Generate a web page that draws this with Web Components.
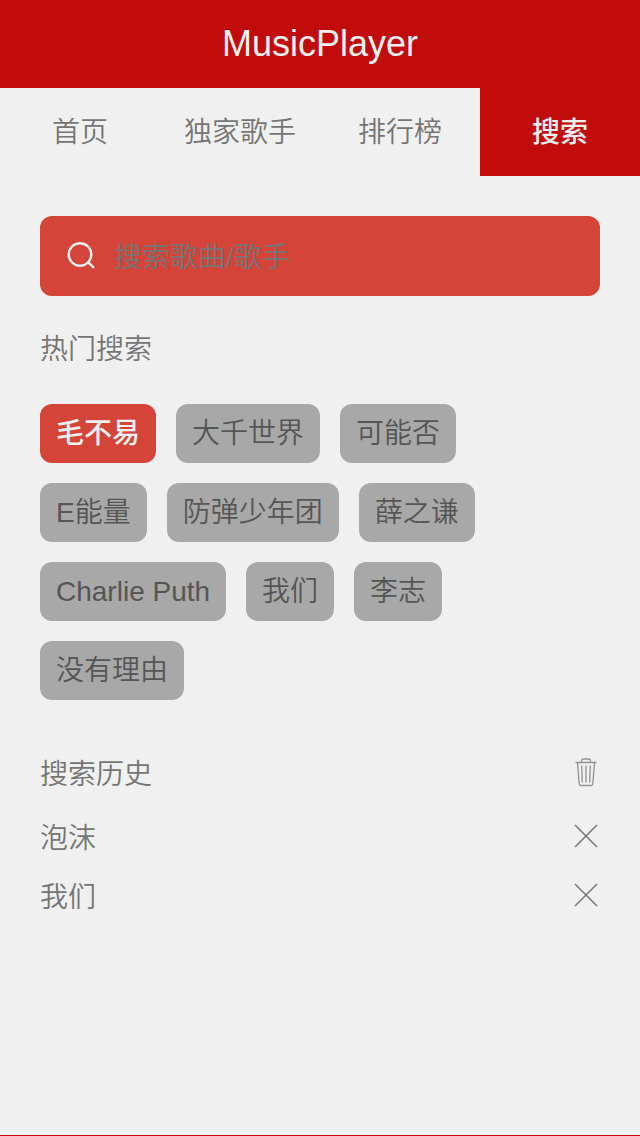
<!DOCTYPE html>
<html lang="zh-CN">
<head>
<meta charset="utf-8">
<meta name="viewport" content="width=device-width, initial-scale=1">
<title>MusicPlayer</title>
<style>
  body {
    margin: 0;
    background: #f0f0f0;
    color: #757575;
    font: 350 28px/40px "Liberation Sans", "Noto Sans CJK SC", sans-serif;
  }
</style>
</head>
<body>
<music-app></music-app>

<script>
const define = (name, html, setup) => {
  const template = document.createElement('template');
  template.innerHTML = html;
  customElements.define(name, class extends HTMLElement {
    constructor() {
      super();
      this.attachShadow({ mode: 'open' }).append(template.content.cloneNode(true));
    }
    connectedCallback() {
      if (setup) setup(this, this.shadowRoot);
    }
  });
};

define('app-header', `
  <style>
    :host { display: block; background: #c20c0c; color: #f0f0f0; }
    h1 { margin: 0; font-size: 36px; font-weight: 400; line-height: 88px; text-align: center; }
  </style>
  <h1><slot></slot></h1>
`);

define('nav-tab', `
  <style>
    :host { display: block; }
    a { display: block; padding-top: 2px; line-height: 86px; text-align: center; color: inherit; text-decoration: none; }
    :host([active]) a { background: #c20c0c; color: #f0f0f0; font-weight: 500; }
  </style>
  <a><slot></slot></a>
`, (host, root) => { root.querySelector('a').href = host.getAttribute('href'); });

define('nav-tabs', `
  <style>
    nav { display: grid; grid-template-columns: repeat(4, 1fr); }
    :host { display: block; }
  </style>
  <nav><slot></slot></nav>
`);

define('search-box', `
  <style>
    :host { display: block; }
    label {
      display: flex; align-items: center; gap: 16px;
      height: 80px; padding: 0 24px; box-sizing: border-box;
      background: #d44439; border-radius: 12px; color: #f0f0f0;
    }
    svg { flex: none; width: 34px; height: 34px; }
    input {
      flex: 1; min-width: 0; padding: 4px 0 0; border: 0; outline: 0;
      background: transparent; color: inherit; font: inherit;
    }
    input::placeholder { color: #757575; opacity: 1; }
  </style>
  <label>
    <svg viewBox="0 0 34 34" fill="none" stroke="currentColor" stroke-width="2.4" aria-hidden="true">
      <circle cx="16" cy="15.5" r="11.3"/>
      <path d="M24 23.2l6 5.6"/>
    </svg>
    <input type="text" placeholder="搜索歌曲/歌手" aria-label="搜索歌曲/歌手">
  </label>
`);

define('hot-tag', `
  <style>
    :host { display: block; }
    button {
      display: block; height: 59px; padding: 0 16px; border: 0; border-radius: 12px;
      background: #a8a8a8; color: #555; font: inherit; cursor: pointer;
    }
    :host([active]) button { background: #d44439; color: #f0f0f0; font-weight: 500; }
  </style>
  <button type="button"><slot></slot></button>
`);

define('hot-search', `
  <style>
    :host { display: block; }
    h2 { margin: 0 0 34px; font: inherit; }
    div { display: flex; flex-wrap: wrap; gap: 20px; padding-right: 80px; }
  </style>
  <h2>热门搜索</h2>
  <div><slot></slot></div>
`);

define('history-item', `
  <style>
    :host { display: flex; align-items: center; justify-content: space-between; }
    span { padding-top: 6px; line-height: 34px; }
    button { display: block; padding: 0; border: 0; background: none; color: inherit; cursor: pointer; }
    svg { display: block; width: 28px; height: 28px; }
  </style>
  <span><slot></slot></span>
  <button type="button" aria-label="删除">
    <svg viewBox="0 0 28 28" fill="none" stroke="currentColor" stroke-width="1.5" aria-hidden="true">
      <path d="M3 3l22 22M25 3l-22 22"/>
    </svg>
  </button>
`);

define('search-history', `
  <style>
    :host { display: block; }
    header { display: flex; align-items: center; justify-content: space-between; margin-bottom: 24px; }
    h2 { margin: 0; padding-top: 6px; font: inherit; line-height: 34px; }
    button { display: block; padding: 0; border: 0; background: none; color: #929292; cursor: pointer; }
    svg { display: block; width: 28px; height: 32px; }
    .list { display: grid; gap: 19px; }
  </style>
  <header>
    <h2>搜索历史</h2>
    <button type="button" aria-label="清空搜索历史">
      <svg viewBox="0 0 28 32" fill="none" stroke="currentColor" stroke-width="1.3" aria-hidden="true">
        <path d="M3.5 6.5h21M9.5 6.5v-1.7q0-1.8 1.8-1.8h5.4q1.8 0 1.8 1.8v1.7M5.5 6.5l1.7 21.2q.1 1.8 1.8 1.8h10q1.7 0 1.8-1.8L22.5 6.5M9.7 9.5l.6 17M14 9.5v17M18.3 9.5l-.6 17"/>
      </svg>
    </button>
  </header>
  <div class="list"><slot></slot></div>
`);

define('music-app', `
  <style>
    :host {
      display: flex; flex-direction: column; box-sizing: border-box;
      min-height: 100vh; border-bottom: 1px solid #c20c0c;
    }
    main { display: grid; padding: 40px; }
    hot-search { margin: 34px 0 52px; }
  </style>
  <app-header>MusicPlayer</app-header>
  <nav-tabs>
    <nav-tab href="#home">首页</nav-tab>
    <nav-tab href="#singers">独家歌手</nav-tab>
    <nav-tab href="#rank">排行榜</nav-tab>
    <nav-tab href="#search" active>搜索</nav-tab>
  </nav-tabs>
  <main>
    <search-box></search-box>
    <hot-search>
      <hot-tag active>毛不易</hot-tag>
      <hot-tag>大千世界</hot-tag>
      <hot-tag>可能否</hot-tag>
      <hot-tag>E能量</hot-tag>
      <hot-tag>防弹少年团</hot-tag>
      <hot-tag>薛之谦</hot-tag>
      <hot-tag>Charlie Puth</hot-tag>
      <hot-tag>我们</hot-tag>
      <hot-tag>李志</hot-tag>
      <hot-tag>没有理由</hot-tag>
    </hot-search>
    <search-history>
      <history-item>泡沫</history-item>
      <history-item>我们</history-item>
    </search-history>
  </main>
`);
</script>
</body>
</html>
